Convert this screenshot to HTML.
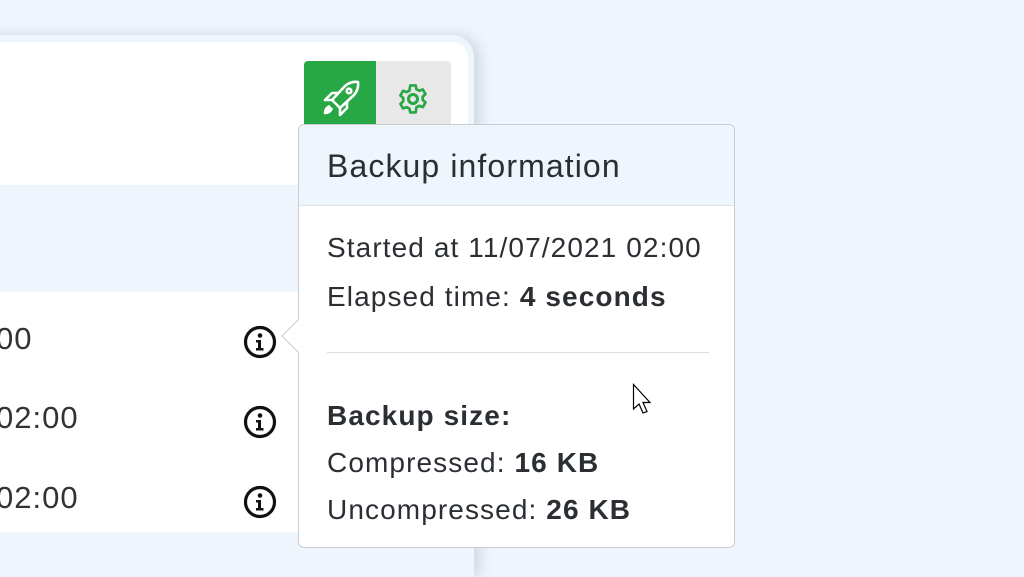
<!DOCTYPE html><html style="overflow:hidden;height:577px"><head><style>
body{margin:0;width:1024px;height:577px;overflow:hidden;background:#eef5fd;position:relative;font-family:"Liberation Sans","DejaVu Sans",sans-serif;color:#212529}
.card{position:absolute;left:-30px;top:35px;width:504px;height:542px;background:#eef5fd;border-radius:22px 22px 0 0;box-shadow:6px 0 14px rgba(0,0,0,.12);overflow:hidden}
.inner{position:absolute;left:0;top:7px;width:498px;height:535px;background:#fff;border-radius:18px 16px 0 0;overflow:hidden}
.band{position:absolute;left:0;width:498px;background:#eef5fd}
.t{position:absolute;font-size:31px;letter-spacing:1px;color:#333}
.i{position:absolute;left:243px;width:34px;height:34px}
.btn{position:absolute;top:61px;height:66px}
.pop{position:absolute;left:298px;top:124px;width:437px;height:424px;background:#fff;border:1px solid #c8cdd2;border-radius:6px;box-sizing:border-box}
.ph{height:80px;background:#eef5fd;border-bottom:1px solid #dde3e8;border-radius:6px 6px 0 0;font-size:32px;letter-spacing:1.1px;line-height:82px;padding-left:28px;color:#2b2f33}
.pb{position:absolute;left:28px;font-size:28px;letter-spacing:1.1px;color:#2b2f33}
</style></head><body>
<div class="card"><div class="inner">
<div class="band" style="top:143px;height:107px"></div>
<div class="band" style="top:490px;height:45px"></div>
</div></div>
<div class="t" style="left:-4px;top:321px">00</div>
<div class="t" style="left:-4px;top:400px">02:00</div>
<div class="t" style="left:-4px;top:480px">02:00</div>
<svg class="i" style="top:325px" viewBox="0 0 34 34"><circle cx="17" cy="17" r="14.5" fill="none" stroke="#111" stroke-width="3.2"/><circle cx="17" cy="10.5" r="2.3" fill="#111"/><path d="M13 15h5v8h2.5v2.5h-7.5v-2.5h2v-5.5h-2z" fill="#111"/></svg>
<svg class="i" style="top:405px" viewBox="0 0 34 34"><circle cx="17" cy="17" r="14.5" fill="none" stroke="#111" stroke-width="3.2"/><circle cx="17" cy="10.5" r="2.3" fill="#111"/><path d="M13 15h5v8h2.5v2.5h-7.5v-2.5h2v-5.5h-2z" fill="#111"/></svg>
<svg class="i" style="top:485px" viewBox="0 0 34 34"><circle cx="17" cy="17" r="14.5" fill="none" stroke="#111" stroke-width="3.2"/><circle cx="17" cy="10.5" r="2.3" fill="#111"/><path d="M13 15h5v8h2.5v2.5h-7.5v-2.5h2v-5.5h-2z" fill="#111"/></svg>
<div class="btn" style="left:304px;width:72px;background:#28a745;border-radius:4px 0 0 0"></div>
<div class="btn" style="left:376px;width:75px;background:#e8e8e8;border-radius:0 4px 0 0"></div>
<svg style="position:absolute;left:321px;top:80px" width="40" height="38" viewBox="0 0 40 38" fill="none" stroke="#fff" stroke-width="2.6" stroke-linejoin="round"><path d="M11 20 L24 6 Q30 1 37 2 Q38 9 33 15 L19 28 Z"/><circle cx="28" cy="11" r="2.3"/><path d="M11 20 L4 20 L11 13 L17 13"/><path d="M19 28 L19 35 L26 28 L26 22"/><path d="M9 26 Q4 28 4 33 Q9 33 11 28" fill="#fff"/></svg>
<svg style="position:absolute;left:395px;top:81px" width="36" height="36" viewBox="0 0 24 24" fill="none" stroke="#28a745" stroke-width="2" stroke-linejoin="round"><path d="M10 2h4l.6 2.8 2 1.1 2.7-.9 2 3.4-2.1 1.9v2.4l2.1 1.9-2 3.4-2.7-.9-2 1.1L14 22h-4l-.6-2.8-2-1.1-2.7.9-2-3.4 2.1-1.9v-2.4L2.7 9.4l2-3.4 2.7.9 2-1.1z" transform="scale(.9) translate(1.3 1.3)"/><circle cx="12" cy="12" r="3"/></svg>
<div class="pop">
<div class="ph">Backup information</div>
<div class="pb" style="top:98px;line-height:49px">Started at 11/07/2021 02:00<br>Elapsed time: <b>4 seconds</b></div>
<div style="position:absolute;left:28px;top:227px;width:382px;height:1px;background:#dcdfe2"></div>
<div class="pb" style="top:267px;line-height:47px"><b>Backup size:</b><br>Compressed: <b>16 KB</b><br>Uncompressed: <b>26 KB</b></div>
</div>
<svg style="position:absolute;left:280px;top:318px" width="20" height="36"><path d="M19 1 L2 18 L19 35" fill="#fff" stroke="#c8cdd2"/></svg>
<svg style="position:absolute;left:632px;top:383px" width="28" height="42"><path d="M1.5 1.5 L1.5 26 L7 21 L11 30 L15 28.5 L11 19.5 L18 19.5 Z" fill="#fff" stroke="#000" stroke-width="1.2"/></svg>
</body></html>
